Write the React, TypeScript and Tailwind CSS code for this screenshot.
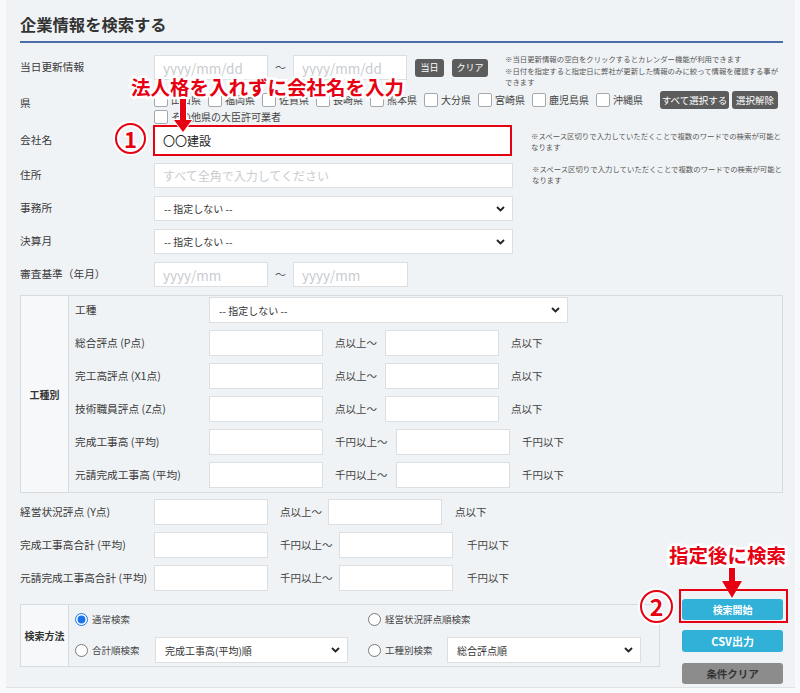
import React from "react";

function TextBox({ w, placeholder, value, small }: { w: string; placeholder?: string; value?: string; small?: boolean }) {
  return (
    <input
      type="text"
      readOnly
      defaultValue={value}
      placeholder={placeholder}
      className={`${w} h-[25px] border border-[#dcdfe2] bg-white px-[8px] text-[#222] outline-none placeholder:text-[#c9cccf] ${
        small ? "text-[12px]" : "text-[13.5px]"
      }`}
    />
  );
}

function Chevron() {
  return (
    <svg width="9" height="6" viewBox="0 0 9 6" className="shrink-0">
      <path d="M1 1 L4.5 4.5 L8 1" fill="none" stroke="#222" strokeWidth="1.8" />
    </svg>
  );
}

function SelectBox({ w, text, h = "h-[26px]" }: { w: string; text: string; h?: string }) {
  return (
    <div className={`${w} ${h} flex items-center justify-between border border-[#dcdfe2] bg-white pl-[9px] pr-[7px] text-[10px] text-[#333]`}>
      <span>{text}</span>
      <Chevron />
    </div>
  );
}

function Check({ label }: { label?: string }) {
  return (
    <span className="flex items-center">
      <span className="h-[14px] w-[14px] rounded-[2px] border border-[#a5a8ab] bg-white" />
      {label ? <span className="ml-[3px] text-[10px] leading-[14px] text-[#444]">{label}</span> : null}
    </span>
  );
}

function Radio({ label, checked }: { label: string; checked?: boolean }) {
  return (
    <label className="flex items-center text-[9.5px] text-[#444]">
      <input type="radio" name="method" defaultChecked={checked} className="m-0 h-[13px] w-[13px] accent-[#1a73e8]" />
      <span className="ml-[4px]">{label}</span>
    </label>
  );
}

function Label({ text, w = "w-[134px]" }: { text: string; w?: string }) {
  return <div className={`${w} shrink-0 text-[10.7px] text-[#3a3a3a]`}>{text}</div>;
}

function RangeRow({ label, unit, mt, tw, ew }: { label: string; unit: "点" | "千円"; mt: string; tw: string; ew: string }) {
  return (
    <div className={`${mt} flex h-[26px] items-center`}>
      <Label text={label} />
      <TextBox w="w-[114px] h-[26px]" />
      <span className={`${tw} ml-[12px] shrink-0 text-[10.5px] text-[#444]`}>{unit}以上～</span>
      <TextBox w="w-[114px] h-[26px]" />
      <span className={`${ew} text-[10.5px] text-[#444]`}>{unit}以下</span>
    </div>
  );
}

const prefs = ["山口県", "福岡県", "佐賀県", "長崎県", "熊本県", "大分県", "宮崎県", "鹿児島県", "沖縄県"];

export default function App() {
  return (
    <div className="relative h-[693px] w-[800px] overflow-hidden bg-[#f7f9fa] font-['Noto_Sans_CJK_JP','Noto_Sans',sans-serif]">
      <div className="ml-[6px] h-[688px] w-[789px] border-b border-[#dfe3e6] bg-[#f0f3f5] pl-[14px] pr-[12px] pt-[9px]">
        {/* タイトル */}
        <h1 className="h-[34px] border-b-2 border-[#4a6ea9] text-[16.3px] font-bold leading-[30px] text-[#333]">
          企業情報を検索する
        </h1>

        {/* 当日更新情報 */}
        <div className="mt-[12px] flex h-[25px] items-center">
          <Label text="当日更新情報" />
          <TextBox w="w-[114px]" placeholder="yyyy/mm/dd" />
          <span className="w-[25px] text-center text-[11px] text-[#555]">～</span>
          <TextBox w="w-[114px]" placeholder="yyyy/mm/dd" />
          <button type="button" className="ml-[8px] h-[18px] w-[29px] rounded-[3px] bg-[#5c5c5c] text-[9px] text-white">
            当日
          </button>
          <button type="button" className="ml-[8px] h-[18px] w-[36px] rounded-[3px] bg-[#5c5c5c] text-[9px] text-white">
            クリア
          </button>
          <div className="ml-[17px] self-start -mt-[2px] whitespace-nowrap text-[7.4px] leading-[11.5px] text-[#555]">
            ※当日更新情報の空白をクリックするとカレンダー機能が利用できます
            <br />
            ※日付を指定すると指定日に弊社が更新した情報のみに絞って情報を確認する事が
            <br />
            できます
          </div>
        </div>

        {/* 県 */}
        <div className="mt-[11px] flex h-[33px]">
          <div className="flex h-[25px] w-[134px] shrink-0 items-center text-[10.7px] text-[#3a3a3a]">県</div>
          <div>
            <div className="flex h-[18px] items-center">
              {prefs.map((p) => (
                <span key={p} className="mr-[7px]">
                  <Check label={p} />
                </span>
              ))}
              <button type="button" className="ml-[10px] h-[18px] w-[69px] rounded-[3px] bg-[#5c5c5c] text-[9.5px] text-white">
                すべて選択する
              </button>
              <button type="button" className="ml-[3px] h-[18px] w-[46px] rounded-[3px] bg-[#5c5c5c] text-[9.5px] text-white">
                選択解除
              </button>
            </div>
            <div className="mt-[1px]">
              <Check label="その他県の大臣許可業者" />
            </div>
          </div>
        </div>

        {/* 会社名 */}
        <div className="mt-[1px] flex h-[31px] items-center">
          <Label text="会社名" w="w-[133px]" />
          <input
            type="text"
            readOnly
            defaultValue="〇〇建設"
            className="h-[31px] w-[359px] border-2 border-[#e60012] bg-white px-[8px] text-[12px] text-[#222] outline-none"
          />
          <div className="ml-[19px] self-start mt-[5px] whitespace-nowrap text-[7.4px] leading-[11px] text-[#555]">
            ※スペース区切りで入力していただくことで複数のワードでの検索が可能と
            <br />
            なります
          </div>
        </div>

        {/* 住所 */}
        <div className="mt-[7px] flex h-[25px] items-center">
          <Label text="住所" />
          <TextBox w="w-[359px]" placeholder="すべて全角で入力してください" small />
          <div className="ml-[19px] self-start mt-[0px] whitespace-nowrap text-[7.4px] leading-[11px] text-[#555]">
            ※スペース区切りで入力していただくことで複数のワードでの検索が可能と
            <br />
            なります
          </div>
        </div>

        <div className="mt-[8px] flex items-center">
          <Label text="事務所" />
          <SelectBox w="w-[359px]" text="-- 指定しない --" h="h-[25px]" />
        </div>
        <div className="mt-[8px] flex items-center">
          <Label text="決算月" />
          <SelectBox w="w-[359px]" text="-- 指定しない --" h="h-[25px]" />
        </div>
        <div className="mt-[8px] flex h-[25px] items-center">
          <Label text="審査基準（年月）" />
          <TextBox w="w-[114px]" placeholder="yyyy/mm" />
          <span className="w-[25px] text-center text-[11px] text-[#555]">～</span>
          <TextBox w="w-[115px]" placeholder="yyyy/mm" />
        </div>

        {/* 工種別 */}
        <div className="mt-[8px] flex border border-[#d6dbdf]">
          <div className="flex w-[48px] shrink-0 items-center justify-center border-r border-[#d6dbdf] bg-[#f6f8f9] text-[10px] font-bold text-[#333]">
            工種別
          </div>
          <div className="pb-[4px] pl-[6px] pt-[1px]">
            <div className="flex h-[26px] items-center">
              <Label text="工種" />
              <SelectBox w="w-[359px]" text="-- 指定しない --" />
            </div>
            <RangeRow label="総合評点 (P点)" unit="点" mt="mt-[7px]" tw="w-[50px]" ew="ml-[12px]" />
            <RangeRow label="完工高評点 (X1点)" unit="点" mt="mt-[7px]" tw="w-[50px]" ew="ml-[12px]" />
            <RangeRow label="技術職員評点 (Z点)" unit="点" mt="mt-[7px]" tw="w-[50px]" ew="ml-[12px]" />
            <RangeRow label="完成工事高 (平均)" unit="千円" mt="mt-[7px]" tw="w-[61px]" ew="ml-[12px]" />
            <RangeRow label="元請完成工事高 (平均)" unit="千円" mt="mt-[7px]" tw="w-[61px]" ew="ml-[12px]" />
          </div>
        </div>

        <RangeRow label="経営状況評点 (Y点)" unit="点" mt="mt-[6px]" tw="w-[48px]" ew="ml-[13px]" />
        <RangeRow label="完成工事高合計 (平均)" unit="千円" mt="mt-[7px]" tw="w-[59px]" ew="ml-[14px]" />
        <RangeRow label="元請完成工事高合計 (平均)" unit="千円" mt="mt-[7px]" tw="w-[59px]" ew="ml-[14px]" />

        {/* 検索方法 + ボタン */}
        <div className="mt-[8px] flex items-start">
          <div className="mt-[5px] flex w-[642px] border border-[#d6dbdf]">
            <div className="flex w-[48px] shrink-0 items-center justify-center border-r border-[#d6dbdf] bg-[#f6f8f9] text-[10px] font-bold text-[#333]">
              検索方法
            </div>
            <div className="pb-[3px] pl-[6px] pt-[2px]">
              <div className="flex h-[24px] items-center">
                <div className="w-[293px]">
                  <Radio label="通常検索" checked />
                </div>
                <Radio label="経営状況評点順検索" />
              </div>
              <div className="mt-[6px] flex h-[26px] items-center">
                <div className="w-[80px]">
                  <Radio label="合計順検索" />
                </div>
                <SelectBox w="w-[193px]" text="完成工事高(平均)順" />
                <div className="ml-[20px] w-[79px]">
                  <Radio label="工種別検索" />
                </div>
                <SelectBox w="w-[194px]" text="総合評点順" />
              </div>
            </div>
          </div>

          <div className="ml-[22px] flex w-[101px] flex-col">
            <button type="button" className="h-[21px] rounded-[3px] bg-[#31b0d8] text-[10px] font-bold text-white">
              検索開始
            </button>
            <button type="button" className="mt-[10px] h-[22px] rounded-[3px] bg-[#31b0d8] text-[11px] font-bold text-white">
              CSV出力
            </button>
            <button type="button" className="mt-[11px] h-[21px] rounded-[3px] bg-[#8c8c8c] text-[10.5px] font-bold text-[#333]">
              条件クリア
            </button>
          </div>
        </div>
      </div>

      {/* 注釈 */}
      <div className="absolute left-[131px] top-[77px] whitespace-nowrap text-[19.5px] font-bold leading-[20px] text-[#e60012] [-webkit-text-stroke:5px_white] [paint-order:stroke_fill]">
        法人格を入れずに会社名を入力
      </div>
      <svg className="absolute left-[173px] top-[99px]" width="20" height="34" viewBox="0 0 20 34">
        <path d="M7 0 H13 V21 H19 L10 33 L1 21 H7 Z" fill="#e60012" stroke="white" strokeWidth="2" paintOrder="stroke" />
      </svg>
      <div className="absolute left-[115px] top-[123px] flex h-[31px] w-[31px] items-center justify-center rounded-full border-[2.5px] border-[#e60012] bg-transparent text-[22px] font-bold text-[#e60012] shadow-[0_0_0_2px_white,inset_0_0_0_2px_white] [-webkit-text-stroke:3px_white] [paint-order:stroke_fill]">
        1
      </div>

      <div className="absolute left-[669px] top-[545px] whitespace-nowrap text-[19.5px] font-bold leading-[20px] text-[#e60012] [-webkit-text-stroke:5px_white] [paint-order:stroke_fill]">
        指定後に検索
      </div>
      <svg className="absolute left-[721px] top-[567px]" width="22" height="32" viewBox="0 0 22 32">
        <path d="M8 1 H14 V14 H21 L11 31 L1 14 H8 Z" fill="#e60012" stroke="white" strokeWidth="2" paintOrder="stroke" />
      </svg>
      <div className="absolute left-[640px] top-[590px] flex h-[33px] w-[33px] items-center justify-center rounded-full border-[2.5px] border-[#e60012] text-[23px] font-bold text-[#e60012] shadow-[0_0_0_2px_white,inset_0_0_0_2px_white] [-webkit-text-stroke:3px_white] [paint-order:stroke_fill]">
        2
      </div>
      <div className="absolute left-[679px] top-[589px] h-[34px] w-[109px] border-2 border-[#e60012]" />
    </div>
  );
}
